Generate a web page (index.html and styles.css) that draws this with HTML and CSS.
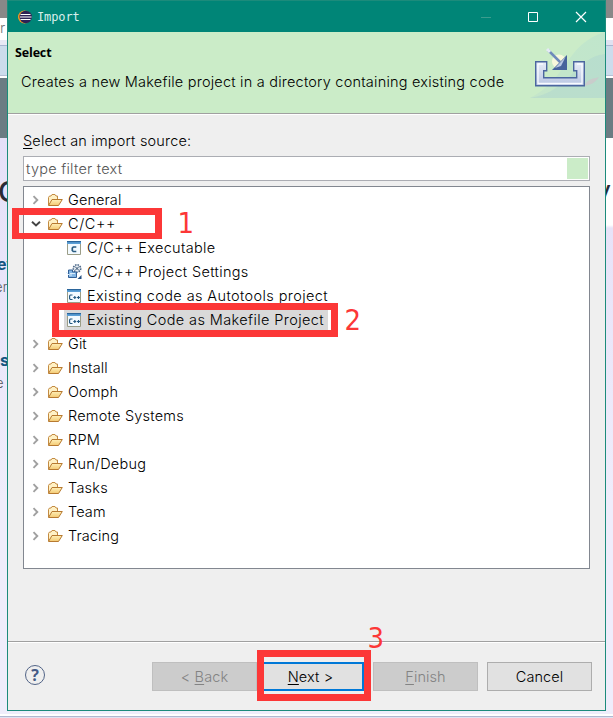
FILE: index.html
```
<!DOCTYPE html>
<html lang="en">
<head>
<meta charset="utf-8">
<title>Import</title>
<link rel="stylesheet" href="styles.css">
</head>
<body>
<svg class="defs" aria-hidden="true">
  <defs>
    <linearGradient id="gold" x1="0" y1="0" x2="0" y2="1"><stop offset="0" stop-color="#fff0b8"/><stop offset="1" stop-color="#f3c972"/></linearGradient>
    <linearGradient id="steel" x1="0" y1="0" x2="0" y2="1"><stop offset="0" stop-color="#e8edf8"/><stop offset="1" stop-color="#b8c5e2"/></linearGradient>
    <linearGradient id="wave" x1="0" y1="1" x2="1" y2="0"><stop offset="0" stop-color="#c5e6ca"/><stop offset="1" stop-color="#c0e6cc"/></linearGradient>
    <symbol id="folder" viewBox="0 0 16 16">
      <path d="M1.500 13V5.500l1-1.500H4l1-1.500h3l1 1.500h1.500V7" fill="#fff1c5" stroke="#c38b42"/>
      <path d="M1.500 13.500 5 7.500h10.300L11.500 13.500z" fill="url(#gold)" stroke="#b77a31"/>
    </symbol>
    <symbol id="shut" viewBox="0 0 8 10"><path d="M1.500 1.200 5.300 5 1.500 8.800" fill="none" stroke="#a0a0a0" stroke-width="1.900"/></symbol>
    <symbol id="open" viewBox="0 0 10 8"><path d="M1 1.700 5 5.500 9 1.700" fill="none" stroke="#444" stroke-width="1.900"/></symbol>
    <symbol id="file" viewBox="0 0 16 16">
      <path d="M1.500 1.500h13v13h-13z" fill="#f3faff" stroke="#9b9d87"/>
      <path d="M1 1h14v3H1z" fill="#5b9fd6"/><path d="M1 1h14v1.200H1z" fill="#2b659b"/>
    </symbol>
    <symbol id="cpp" viewBox="0 0 16 16">
      <use href="#file"/>
      <path d="M6.500 7H4.300L3.600 8v2.500l.7 1h2.200M7.300 9.500h3M8.800 8v3M11 9.500h3M12.500 8v3" fill="none" stroke="#285b82" stroke-width="1.200"/>
    </symbol>
  </defs>
</svg>
<div class="backdrop left"><span class="b1">r</span><span class="b2">C</span><span class="b3">ev</span><span class="b4">er</span><span class="b5">s</span><span class="b6">e</span></div>
<div class="backdrop right"><span class="b7">y</span></div>
<main class="window">
  <header class="titlebar">
    <svg class="logo" viewBox="0 0 14 14"><circle cx="6.500" cy="7" r="6.500" fill="#f59a23"/><circle cx="7.700" cy="7" r="6.200" fill="#2c2255"/><path d="M2.500 4.500h10M2 7h11.500M2.500 9.500h10" stroke="#fff" stroke-width="1.200"/></svg>
    <span class="caption">Import</span>
    <svg class="controls" viewBox="0 0 106 12"><path d="M0 6.500h10" stroke="#3b9d8e"/><path d="M47.500 1.500h9v9h-9z" fill="none" stroke="#fff"/><path d="m95 1 10 10M105 1 95 11" stroke="#fff" stroke-width="1.200"/></svg>
  </header>
  <section class="banner">
    <div class="words"><h1>Select</h1><p>Creates a new Makefile project in a directory containing existing code</p></div>
    <svg class="art" viewBox="0 0 75 66">
      <path d="M0 66C38 47 35 12 75 0v66z" fill="url(#wave)"/><path d="M0 66C40 60 45 25 75 22v44z" fill="#a9cfd2" opacity=".35"/>
      <path d="M54 54c4-8 10-7 15-9-4 6-9 8-15 9z" fill="#d9b9ca" opacity=".5"/>
      <path d="M5.700 29.700h11v9h-3v7h33v-7h-3v-9h10.600v24H5.700z" fill="url(#steel)" stroke="#4b669f" stroke-width="1.400"/>
      <path d="M8 32h5M8 32v19.500h44V32h-5" fill="none" stroke="#f8faff" stroke-width="1.300"/>
      <circle cx="29" cy="29.500" r="7" fill="#f8f8dc"/>
      <path d="m18 18 12 12" stroke="#6f8abb" stroke-width="2.500"/><path d="m17 17 3 3" stroke="#e5eaf5" stroke-width="3"/>
      <path d="M37 23v15H22z" fill="#46639c"/><path d="M35.500 25 25 36l6-2z" fill="#b9c8e3"/>
    </svg>
  </section>
  <section class="content">
    <label class="label"><u>S</u>elect an import source:</label>
    <div class="filter"><span>type filter text</span><i></i></div>
    <ul class="tree">
      <li><svg class="shut"><use href="#shut"/></svg><svg class="ico"><use href="#folder"/></svg><span>General</span></li>
      <li class="expanded"><svg class="open"><use href="#open"/></svg><svg class="ico"><use href="#folder"/></svg><span>C/C++</span></li>
      <li class="child"><svg class="ico" viewBox="0 0 16 16"><use href="#file"/><path d="M10.300 7H7.300L6.300 8v2.500l1 1h3" fill="none" stroke="#285b82" stroke-width="1.700"/></svg><span>C/C++ Executable</span></li>
      <li class="child"><svg class="ico" viewBox="0 0 16 16"><circle cx="11" cy="4.500" r="3.700" fill="#e8edf3" stroke="#4b6788" stroke-width="1.600" stroke-dasharray="1.500 1"/><path d="m9 2.500 4 4m0-4-4 4" stroke="#33506f"/><path d="M2.500 8V6h4v2h4v5.500h-8V8z" fill="#83b6e5" stroke="#315f96"/><path d="m0 8 3 3h3M4 9.500h5" fill="none" stroke="#d9ecfb"/><path d="M15.500 11v4h-4z" fill="#234f82"/></svg><span>C/C++ Project Settings</span></li>
      <li class="child wide"><svg class="ico"><use href="#cpp"/></svg><span>Existing code as Autotools project</span></li>
      <li class="child wide selected"><svg class="ico" ><use href="#cpp"/></svg><span>Existing Code as Makefile Project</span></li>
      <li><svg class="shut"><use href="#shut"/></svg><svg class="ico"><use href="#folder"/></svg><span>Git</span></li>
      <li><svg class="shut"><use href="#shut"/></svg><svg class="ico"><use href="#folder"/></svg><span>Install</span></li>
      <li><svg class="shut"><use href="#shut"/></svg><svg class="ico"><use href="#folder"/></svg><span>Oomph</span></li>
      <li><svg class="shut"><use href="#shut"/></svg><svg class="ico"><use href="#folder"/></svg><span class="long">Remote Systems</span></li>
      <li><svg class="shut"><use href="#shut"/></svg><svg class="ico"><use href="#folder"/></svg><span class="long">RPM</span></li>
      <li><svg class="shut"><use href="#shut"/></svg><svg class="ico"><use href="#folder"/></svg><span class="long">Run/Debug</span></li>
      <li><svg class="shut"><use href="#shut"/></svg><svg class="ico"><use href="#folder"/></svg><span class="long">Tasks</span></li>
      <li><svg class="shut"><use href="#shut"/></svg><svg class="ico"><use href="#folder"/></svg><span>Team</span></li>
      <li><svg class="shut"><use href="#shut"/></svg><svg class="ico"><use href="#folder"/></svg><span>Tracing</span></li>
    </ul>
  </section>
  <footer class="actions">
    <span class="help">?</span>
    <button class="btn" disabled><span>&lt; <u>B</u>ack</span></button>
    <button class="btn primary"><span><u>N</u>ext &gt;</span></button>
    <button class="btn gap" disabled><span><u>F</u>inish</span></button>
    <button class="btn gap"><span>Cancel</span></button>
  </footer>
</main>
<div class="mark m1"></div><b class="num n1">1</b>
<div class="mark m2"></div><b class="num n2">2</b>
<div class="mark m3"></div><b class="num n3">3</b>
</body>
</html>
```
FILE: styles.css
```
* { box-sizing: border-box; }
body {
  margin: 0;
  width: 613px;
  height: 718px;
  overflow: hidden;
  position: relative;
  padding-left: 7px;
  background: linear-gradient(#efedfb 714px, #fff 714px 716px, #b1b8d0 716px 717px, #dfe2f2 717px);
  font: 350 14.500px/20px Inter, "Liberation Sans", sans-serif;
  letter-spacing: .1px;
  color: #000;
}
.defs { position: absolute; width: 0; height: 0; }
.backdrop { position: absolute; top: 0; height: 714px; overflow: hidden; color: #2a2a35; }
.backdrop span { position: absolute; white-space: nowrap; }
.left {
  left: 0; width: 7px;
  background: linear-gradient(#888 18px, #fff 18px 40px, #e9e9f5 40px 45px, #a9b5d2 45px 46px, #ccdcec 46px 75px, #b5bfd5 75px 76px, #fff 76px 78px, #6b7c83 78px 138px, #e5e0f8 138px, #efedfb 500px);
}
.right {
  left: 606px; width: 7px;
  background: linear-gradient(#888 18px, #fff 18px 40px, #e0e2f1 40px 45px, #a9b5d2 45px 46px, #ccdcec 46px 75px, #b5bfd5 75px 76px, #fff 76px 78px, #6b7c83 78px 138px, #fff 138px 225px, #e7e3f8 228px, #efedfb 500px);
}
.b1 { left: 0; top: 18px; color: #777; }
.b2 { left: -2px; top: 182px; font-size: 29px; font-weight: 500; }
.b3 { left: -3px; top: 254px; font-size: 16px; font-weight: 700; color: #155580; }
.b4 { left: -5px; top: 277px; font-size: 13px; color: #555; }
.b5 { left: 0; top: 350px; font-size: 16px; font-weight: 700; color: #155580; }
.b6 { left: -4px; top: 373px; font-size: 13px; color: #555; }
.b7 { left: -9px; top: 180px; font-size: 24px; font-weight: 500; }

.window { width: 599px; height: 711px; border: 1px solid #1c8b7b; border-top: 0; background: #efefef; display: flex; flex-direction: column; }
.titlebar { height: 32px; flex: none; background: #008577; border-top: 1px solid #1c8b7b; display: flex; align-items: center; padding: 0 18px 0 10px; }
.logo { width: 14px; height: 14px; }
.caption { margin-left: 5px; font: 12px/16px "DejaVu Sans Mono", monospace; letter-spacing: -.1px; color: #d9efec; }
.controls { width: 106px; height: 12px; margin-left: auto; }
.banner { height: 83px; flex: none; background: #cbecc8; border-bottom: 1px solid #fff; box-shadow: inset 0 -1px #a0a0a0; display: flex; justify-content: space-between; }
.words { padding: 12px 0 0 7px; }
h1 { margin: 0; font: 700 12.500px/18px "Open Sans", sans-serif; letter-spacing: -.15px; }
.words p { margin: 10px 0 0 6px; white-space: nowrap; letter-spacing: .215px; }
.art { width: 75px; height: 66px; flex: none; }
.content { flex: 1; padding: 16px 15px 0; border-bottom: 1px solid #a0a0a0; }
.label { display: block; height: 20px; letter-spacing: .19px; }
u { text-underline-offset: 2px; text-decoration-thickness: 1px; }
.filter { margin-top: 5px; height: 25px; border: 1px solid #abadb3; background: #fff; display: flex; justify-content: space-between; align-items: center; padding: 0 1px 0 2px; color: #555; letter-spacing: .25px; }
.filter i { width: 21px; height: 21px; background: #cbecc8; }
.tree { list-style: none; margin: 5px 0 0; padding: 1px 0 0 8px; height: 383px; border: 1px solid #828790; background: #fff; }
.tree li { height: 24px; display: flex; align-items: center; }
.shut { width: 8px; height: 10px; margin: 0 7px 0 0; }
.open { width: 10px; height: 8px; margin: 0 6px 0 -1px; }
.ico { width: 16px; height: 16px; }
.tree li span { padding: 0 4px 0 5px; line-height: 20px; white-space: nowrap; }
.tree .expanded span { letter-spacing: .6px; }
.tree .long { letter-spacing: .22px; }
.child { padding-left: 34px; letter-spacing: .34px; }
.wide { letter-spacing: .39px; }
.child.selected { padding-left: 32px; }
.selected .ico { width: 18px; height: 20px; padding: 2px 0 2px 2px; background: #d9d9d9; }
.selected span { background: #d9d9d9; }
.actions { height: 68px; flex: none; border-top: 1px solid #fff; display: flex; align-items: center; padding: 0 13px 0 17px; }
.help { width: 20px; height: 20px; margin: -4px auto 0 0; border: 1px solid #526487; border-radius: 50%; text-align: center; font: 700 16px/18px "Open Sans", sans-serif; color: #455a86; }
.btn { width: 105px; height: 29px; padding: 0; border: 1px solid #adadad; background: #e1e1e1; font: inherit; letter-spacing: inherit; color: #000; }
.btn:disabled { background: #ccc; border-color: #bfbfbf; color: #838383; }
.primary { width: 107px; border: 2px solid #0078d7; }
.gap { margin-left: 9px; }

.mark { position: absolute; border: 7px solid #fc3737; }
.m1 { left: 12px; top: 208px; width: 150px; height: 31px; border-bottom-width: 6px; }
.m2 { left: 52px; top: 303px; width: 286px; height: 34px; }
.m3 { left: 257px; top: 650px; width: 114px; height: 51px; }
.num { position: absolute; font: 400 28px/28px "DejaVu Sans", sans-serif; color: #fc3737; letter-spacing: 0; transform: scaleX(.93); }
.n1 { left: 177px; top: 210px; }
.n2 { left: 344px; top: 307px; }
.n3 { left: 367px; top: 625px; }
```
